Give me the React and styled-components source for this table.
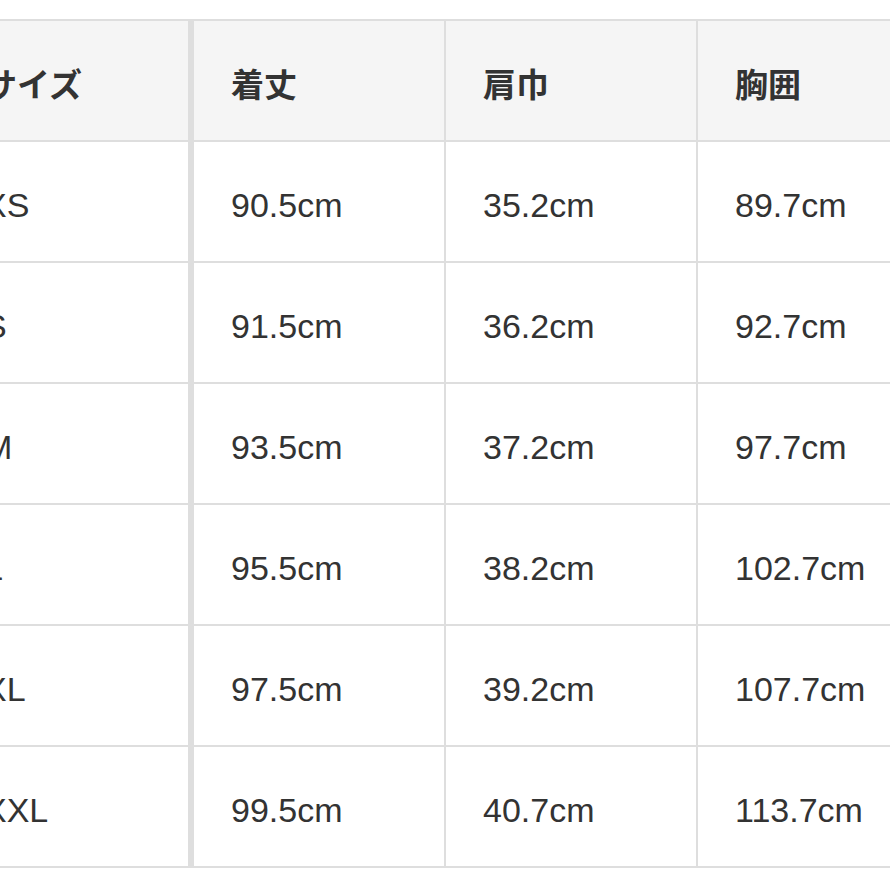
import React from 'react';
import styled, { createGlobalStyle } from 'styled-components';

const GlobalStyle = createGlobalStyle`
  html, body {
    margin: 0;
    padding: 0;
    background: #fff;
  }
`;

const Page = styled.div`
  width: 890px;
  height: 890px;
  overflow: hidden;
  padding-top: 19px;
  box-sizing: border-box;
`;

const Table = styled.div`
  margin-left: -53px;
  width: 1003px;
  border-top: 2px solid #dedede;
`;

const Row = styled.div`
  display: grid;
  grid-template-columns: 247px 252px 252px 252px;
  height: 121px;
  background: ${(p) => (p.$head ? '#f5f5f5' : '#fff')};
`;

const Cell = styled.div`
  box-sizing: border-box;
  display: flex;
  align-items: center;
  padding: ${(p) => (p.$head ? '5px' : '7px')} 0 0 37px;
  border-bottom: 2px solid #dedede;
  border-right: ${(p) => (p.$first ? '6px' : '2px')} solid #dedede;
  color: #333;
  font-family: ${(p) =>
    p.$head
      ? '"Noto Sans CJK JP", "Noto Sans", sans-serif'
      : '"Liberation Sans", Arial, sans-serif'};
  font-size: ${(p) => (p.$head ? '33px' : '34px')};
  font-weight: ${(p) => (p.$head ? 700 : 400)};
  white-space: nowrap;
`;

const head = ['サイズ', '着丈', '肩巾', '胸囲'];

const rows = [
  ['XS', '90.5cm', '35.2cm', '89.7cm'],
  ['S', '91.5cm', '36.2cm', '92.7cm'],
  ['M', '93.5cm', '37.2cm', '97.7cm'],
  ['L', '95.5cm', '38.2cm', '102.7cm'],
  ['XL', '97.5cm', '39.2cm', '107.7cm'],
  ['XXL', '99.5cm', '40.7cm', '113.7cm'],
];

const App = () => {
  return (
    <Page>
      <GlobalStyle />
      <Table>
        <Row $head>
          {head.map((h, i) => (
            <Cell key={h} $head $first={i === 0}>
              {h}
            </Cell>
          ))}
        </Row>
        {rows.map((r) => (
          <Row key={r[0]}>
            {r.map((v, i) => (
              <Cell key={i} $first={i === 0}>
                {v}
              </Cell>
            ))}
          </Row>
        ))}
      </Table>
    </Page>
  );
};

export default App;
